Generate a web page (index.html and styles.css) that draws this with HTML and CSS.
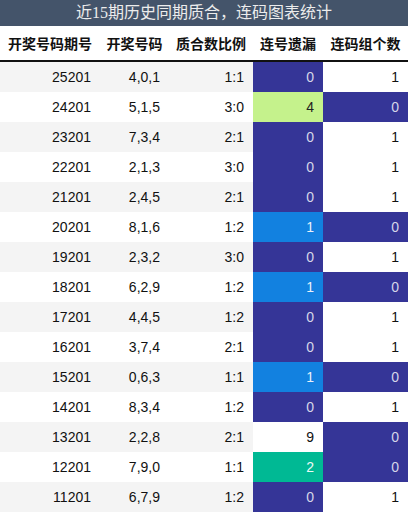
FILE: index.html
```html
<!DOCTYPE html>
<html lang="zh-CN">
<head>
    <meta charset="UTF-8">
    <meta name="viewport" content="width=device-width, initial-scale=1.0">
    <title>近15期历史同期质合，连码图表统计</title>
    <link rel="stylesheet" href="styles.css">
</head>
<body>

    <div class="title">近15期历史同期质合，连码图表统计</div>

    <table class="stats">
        <colgroup>
            <col class="c1"><col class="c2"><col class="c3"><col class="c4"><col class="c5">
        </colgroup>
        <thead>
            <tr>
                <th>开奖号码期号</th>
                <th>开奖号码</th>
                <th>质合数比例</th>
                <th>连号遗漏</th>
                <th>连码组个数</th>
            </tr>
        </thead>
        <tbody id="stats-body">
            <!-- 数据行由脚本生成 -->
        </tbody>
    </table>

    <script>
        document.addEventListener('DOMContentLoaded', function () {
            // 期号, 号码, 比例, 遗漏, 遗漏颜色, 组个数
            const rows = [
                ['25201', '4,0,1', '1:1', 0, 'navy', 1],
                ['24201', '5,1,5', '3:0', 4, 'lime', 0],
                ['23201', '7,3,4', '2:1', 0, 'navy', 1],
                ['22201', '2,1,3', '3:0', 0, 'navy', 1],
                ['21201', '2,4,5', '2:1', 0, 'navy', 1],
                ['20201', '8,1,6', '1:2', 1, 'blue', 0],
                ['19201', '2,3,2', '3:0', 0, 'navy', 1],
                ['18201', '6,2,9', '1:2', 1, 'blue', 0],
                ['17201', '4,4,5', '1:2', 0, 'navy', 1],
                ['16201', '3,7,4', '2:1', 0, 'navy', 1],
                ['15201', '0,6,3', '1:1', 1, 'blue', 0],
                ['14201', '8,3,4', '1:2', 0, 'navy', 1],
                ['13201', '2,2,8', '2:1', 9, 'plain', 0],
                ['12201', '7,9,0', '1:1', 2, 'teal', 0],
                ['11201', '6,7,9', '1:2', 0, 'navy', 1]
            ];

            const body = document.getElementById('stats-body');

            rows.forEach(r => {
                const tr = document.createElement('tr');
                tr.innerHTML = `
                    <td>${r[0]}</td>
                    <td>${r[1]}</td>
                    <td>${r[2]}</td>
                    <td class="${r[4]}">${r[3]}</td>
                    <td class="${r[5] === 0 ? 'navy' : 'plain'}">${r[5]}</td>
                `;
                body.appendChild(tr);
            });
        });
    </script>
</body>
</html>
```

FILE: styles.css
```css
body {
    margin: 0;
    padding: 0;
    background-color: #fff;
    font-family: "Liberation Sans", "Noto Sans CJK SC", sans-serif;
    color: #111;
}

.title {
    height: 26px;
    line-height: 26px;
    background-color: #44546a;
    color: #ececec;
    text-align: center;
    font-family: "Liberation Serif", "Noto Sans CJK SC", serif;
    font-size: 16px;
}

.stats {
    width: 408px;
    border-collapse: collapse;
    table-layout: fixed;
}

.c1 { width: 100px; }
.c2 { width: 69px; }
.c3 { width: 84px; }
.c4 { width: 70px; }
.c5 { width: 85px; }

.stats th {
    height: 34px;
    padding: 0;
    font-family: "Noto Sans CJK SC", sans-serif;
    font-size: 14px;
    font-weight: bold;
    text-align: center;
    color: #111;
    border-bottom: 2px solid #111;
}

.stats td {
    height: 30px;
    padding: 0 9px 0 0;
    font-size: 14px;
    text-align: right;
}

.stats tbody tr:nth-child(odd) {
    background-color: #f4f4f4;
}

.stats td.plain {
    background-color: #fff;
    color: #111;
}

.stats td.navy {
    background-color: #353597;
    color: #d6d6e8;
}

.stats td.lime {
    background-color: #c5f28c;
    color: #222;
}

.stats td.blue {
    background-color: #1281e0;
    color: #e8f0fa;
}

.stats td.teal {
    background-color: #00b994;
    color: #eefaf6;
}
```
